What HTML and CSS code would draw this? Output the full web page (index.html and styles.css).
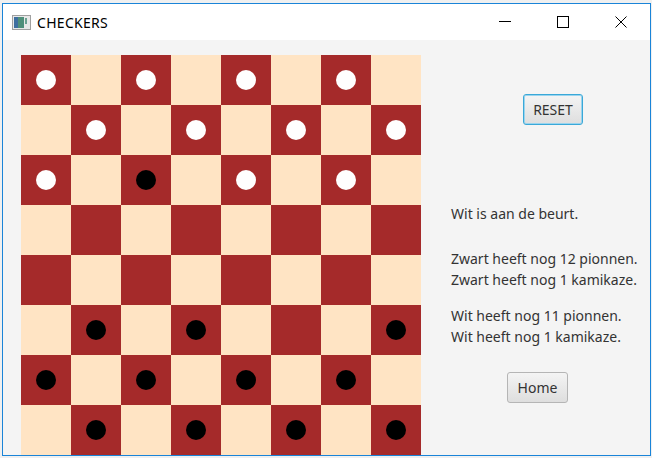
FILE: index.html
```html
<!DOCTYPE html>
<html>
<head>
<meta charset="utf-8">
<link rel="stylesheet" href="styles.css">
</head>
<body>
<div class="window">
  <div class="titlebar">
    <svg class="appicon" width="19" height="15" viewBox="0 0 19 15">
      <rect x="0.5" y="0.5" width="18" height="14" fill="#e8e8e8" stroke="#a0a0a0"/>
      <rect x="2" y="2" width="10" height="11" fill="#4f8f7a"/>
      <rect x="2" y="2" width="4" height="11" fill="#3f6fa0"/>
      <rect x="13" y="3" width="2" height="6" fill="#6aa090"/>
    </svg>
    <span class="title">CHECKERS</span>
    <div class="controls">
      <svg class="ctl" width="58" height="36" viewBox="0 0 58 36"><path d="M23 17.5h12" stroke="#000" stroke-width="1"/></svg>
      <svg class="ctl" width="58" height="36" viewBox="0 0 58 36"><rect x="23.5" y="12.5" width="11" height="11" fill="none" stroke="#000" stroke-width="1"/></svg>
      <svg class="ctl" width="58" height="36" viewBox="0 0 58 36"><path d="M23.5 12.5l11 11M34.5 12.5l-11 11" stroke="#000" stroke-width="1"/></svg>
    </div>
  </div>
  <div class="client">
    <div class="board">
      <div class="sq d"><span class="p w"></span></div><div class="sq l"></div><div class="sq d"><span class="p w"></span></div><div class="sq l"></div><div class="sq d"><span class="p w"></span></div><div class="sq l"></div><div class="sq d"><span class="p w"></span></div><div class="sq l"></div>
      <div class="sq l"></div><div class="sq d"><span class="p w"></span></div><div class="sq l"></div><div class="sq d"><span class="p w"></span></div><div class="sq l"></div><div class="sq d"><span class="p w"></span></div><div class="sq l"></div><div class="sq d"><span class="p w"></span></div>
      <div class="sq d"><span class="p w"></span></div><div class="sq l"></div><div class="sq d"><span class="p b"></span></div><div class="sq l"></div><div class="sq d"><span class="p w"></span></div><div class="sq l"></div><div class="sq d"><span class="p w"></span></div><div class="sq l"></div>
      <div class="sq l"></div><div class="sq d"></div><div class="sq l"></div><div class="sq d"></div><div class="sq l"></div><div class="sq d"></div><div class="sq l"></div><div class="sq d"></div>
      <div class="sq d"></div><div class="sq l"></div><div class="sq d"></div><div class="sq l"></div><div class="sq d"></div><div class="sq l"></div><div class="sq d"></div><div class="sq l"></div>
      <div class="sq l"></div><div class="sq d"><span class="p b"></span></div><div class="sq l"></div><div class="sq d"><span class="p b"></span></div><div class="sq l"></div><div class="sq d"></div><div class="sq l"></div><div class="sq d"><span class="p b"></span></div>
      <div class="sq d"><span class="p b"></span></div><div class="sq l"></div><div class="sq d"><span class="p b"></span></div><div class="sq l"></div><div class="sq d"><span class="p b"></span></div><div class="sq l"></div><div class="sq d"><span class="p b"></span></div><div class="sq l"></div>
      <div class="sq l"></div><div class="sq d"><span class="p b"></span></div><div class="sq l"></div><div class="sq d"><span class="p b"></span></div><div class="sq l"></div><div class="sq d"><span class="p b"></span></div><div class="sq l"></div><div class="sq d"><span class="p b"></span></div>
    </div>
    <div class="side">
      <button class="btn reset focused">RESET</button>
      <div class="turn">Wit is aan de beurt.</div>
      <div class="group g1">
        <div class="line">Zwart heeft nog 12 pionnen.</div>
        <div class="line">Zwart heeft nog 1 kamikaze.</div>
      </div>
      <div class="group g2">
        <div class="line">Wit heeft nog 11 pionnen.</div>
        <div class="line">Wit heeft nog 1 kamikaze.</div>
      </div>
      <button class="btn home">Home</button>
    </div>
  </div>
</div>
</body>
</html>
```
FILE: styles.css
```css
html, body {
  margin: 0;
  padding: 0;
  background: #f0f0f0;
  width: 652px;
  height: 458px;
  overflow: hidden;
}
.window {
  margin: 3px 0 0 2px;
  width: 647px;
  height: 451px;
  border: 1px solid #1a84d8;
  display: flex;
  flex-direction: column;
  overflow: hidden;
  font-family: "Noto Sans", "Open Sans", sans-serif;
}
.titlebar {
  height: 36px;
  flex: none;
  background: #fff;
  display: flex;
  align-items: center;
}
.appicon {
  margin-left: 9px;
  margin-top: 1px;
}
.title {
  margin-left: 6px;
  font-size: 14px;
  letter-spacing: 0.3px;
  color: #000;
}
.controls {
  margin-left: auto;
  display: flex;
  align-self: flex-start;
}
.ctl {
  display: block;
  width: 58px;
  height: 36px;
}
.client {
  flex: 1;
  background: #f4f4f4;
  display: flex;
  padding: 15px 0 0 18px;
  min-height: 0;
}
.board {
  flex: none;
  width: 400px;
  height: 400px;
  display: grid;
  grid-template-columns: repeat(8, 50px);
  grid-template-rows: repeat(8, 50px);
}
.sq {
  display: flex;
  align-items: center;
  justify-content: center;
}
.sq.d { background: #a52a2a; }
.sq.l { background: #ffe4c4; }
.p {
  width: 20px;
  height: 20px;
  border-radius: 50%;
}
.p.w { background: #fff; }
.p.b { background: #000; }
.side {
  display: flex;
  flex-direction: column;
  align-items: flex-start;
  padding-left: 30px;
  color: #333;
  font-size: 14px;
  line-height: 21px;
}
.btn {
  font-family: "Noto Sans", "Open Sans", sans-serif;
  font-size: 14px;
  color: #333;
  height: 31px;
  padding: 0;
  border: 1px solid #b5b5b5;
  border-radius: 3px;
  background: linear-gradient(#f4f4f4, #dedede);
  box-sizing: border-box;
}
.reset {
  margin-top: 39px;
  margin-left: 72px;
  width: 60px;
}
.focused {
  border: 1px solid #3aa8d8;
  box-shadow: inset 0 0 0 1px #9ad4ee;
}
.turn {
  margin-top: 78px;
}
.g1 { margin-top: 24px; }
.g2 { margin-top: 15px; }
.home {
  margin-top: 25px;
  margin-left: 56px;
  width: 61px;
}
```
